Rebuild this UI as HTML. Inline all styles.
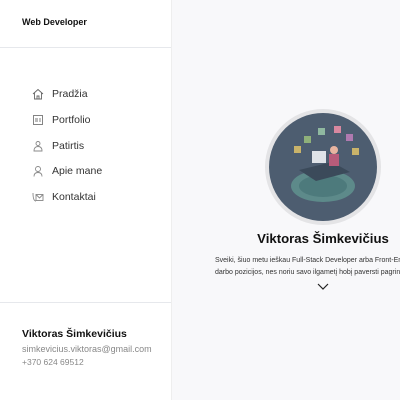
<!DOCTYPE html>
<html><head><meta charset="utf-8"><style>
html,body{margin:0;padding:0;width:400px;height:400px;overflow:hidden;font-family:"Liberation Sans",sans-serif;background:#f8f8fa}
.side{position:absolute;left:0;top:0;width:171px;height:400px;background:#fff;border-right:1px solid #eee}
.hdr{position:absolute;left:22px;top:17px;font-size:9px;font-weight:bold;color:#111}
.l1{position:absolute;left:0;top:47px;width:171px;height:1px;background:#e6e8ec}
.l2{position:absolute;left:0;top:302px;width:171px;height:1px;background:#e6e8ec}
.nav{position:absolute;left:32px;font-size:10.5px;color:#333}
.nav svg{position:absolute;left:0;top:0}
.nav span{position:absolute;left:20px;top:0;white-space:nowrap}
.ft{position:absolute;left:22px;white-space:nowrap}
.main{position:absolute;left:172px;top:0;width:228px;height:400px}
</style></head><body>
<div class="side">
<div class="hdr">Web Developer</div>
<div class="l1"></div>
<div class="nav" style="top:88px"><svg width="12" height="12" viewBox="0 0 12 12" fill="none" stroke="#666" stroke-width="0.9"><path d="M1 6 L6 1.5 L11 6 M2.5 5 V11 H9.5 V5 M5 11 V8 H7 V11"/></svg><span>Pradžia</span></div>
<div class="nav" style="top:114px"><svg width="12" height="12" viewBox="0 0 12 12" fill="none" stroke="#777" stroke-width="0.9"><rect x="1.5" y="1.5" width="9" height="9"/><path d="M3 5h3M3 7h3M8 4v4"/></svg><span>Portfolio</span></div>
<div class="nav" style="top:140px"><svg width="12" height="12" viewBox="0 0 12 12" fill="none" stroke="#888" stroke-width="0.9"><circle cx="6" cy="3.5" r="2"/><path d="M2 11 Q2 6.5 6 6.5 Q10 6.5 10 11 Z"/></svg><span>Patirtis</span></div>
<div class="nav" style="top:165px"><svg width="12" height="12" viewBox="0 0 12 12" fill="none" stroke="#888" stroke-width="0.9"><circle cx="6" cy="4" r="2.5"/><path d="M2 11.5 Q2 7.5 6 7.5 Q10 7.5 10 11.5"/></svg><span>Apie mane</span></div>
<div class="nav" style="top:191px"><svg width="12" height="12" viewBox="0 0 12 12" fill="none" stroke="#888" stroke-width="0.9"><rect x="4" y="3.5" width="7" height="6"/><path d="M4 3.5 L7.5 7 L11 3.5 M1 2 Q1 10 4 10"/></svg><span>Kontaktai</span></div>
<div class="l2"></div>
<div class="ft" style="top:328px;font-size:10.5px;font-weight:bold;color:#111">Viktoras Šimkevičius</div>
<div class="ft" style="top:344px;font-size:9px;color:#888">simkevicius.viktoras@gmail.com</div>
<div class="ft" style="top:357px;font-size:8.5px;color:#888">+370 624 69512</div>
</div>
<div class="main">
<svg style="position:absolute;left:92px;top:108px" width="118" height="118" viewBox="0 0 118 118">
<circle cx="59" cy="59" r="58" fill="#e4e4e6"/>
<circle cx="59" cy="59" r="54" fill="#4d5d70"/>
<ellipse cx="59" cy="78" rx="32" ry="16" fill="#5d8a8a"/>
<ellipse cx="59" cy="78" rx="24" ry="11" fill="#4d7a7c"/>
<path d="M35 62 L68 54 L86 64 L52 73 Z" fill="#3b4a5a"/>
<rect x="48" y="43" width="14" height="12" fill="#dfe3e8"/>
<circle cx="70" cy="42" r="4" fill="#e8b4a0"/>
<rect x="65" y="46" width="10" height="12" fill="#b85c7a"/>
<rect x="30" y="38" width="7" height="7" fill="#c9b36a"/>
<rect x="40" y="28" width="7" height="7" fill="#8fb07a"/>
<rect x="54" y="20" width="7" height="7" fill="#8fb8a0"/>
<rect x="70" y="18" width="7" height="7" fill="#d888a0"/>
<rect x="82" y="26" width="7" height="7" fill="#b07ab0"/>
<rect x="88" y="40" width="7" height="7" fill="#c9b36a"/>
</svg>
<div style="position:absolute;top:231px;width:300px;left:1px;text-align:center;font-size:13.2px;font-weight:bold;color:#111">Viktoras Šimkevičius</div>
<div style="position:absolute;left:43px;top:255px;font-size:7px;color:#333;white-space:nowrap;line-height:12px">Sveiki, šiuo metu ieškau Full-Stack Developer arba Front-End<br>darbo pozicijos, nes noriu savo ilgametį hobį paversti pagrindiniu</div>
<svg style="position:absolute;left:145px;top:283px" width="12" height="8" viewBox="0 0 12 8" fill="none" stroke="#222" stroke-width="1.2"><path d="M1 1 L6 6 L11 1"/></svg>
</div>
</body></html>
